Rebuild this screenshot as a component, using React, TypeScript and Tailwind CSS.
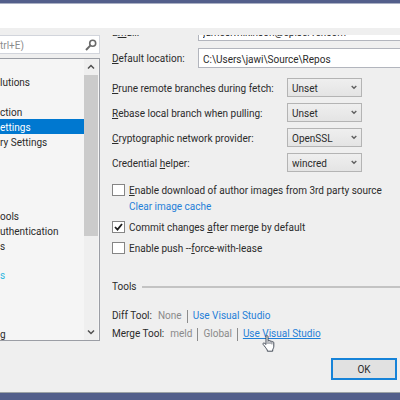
import { useState } from "react"
import type { ReactNode } from "react"

const treeTop = ["", "lutions", "", "ction", "ettings", "ry Settings"]
const treeMiddle = ["ools", "uthentication", "s"]

const gitOptions = [
  { id: "prune", label: <><u>P</u>rune remote branches during fetch:</>, values: ["Unset", "True", "False"] },
  { id: "rebase", label: <><u>R</u>ebase local branch when pulling:</>, values: ["Unset", "True", "False"] },
  { id: "crypto", label: <><u>C</u>ryptographic network provider:</>, values: ["OpenSSL", "Secure Channel"] },
  { id: "credential", label: <>Credential <u>h</u>elper:</>, values: ["wincred", "Unset"] },
]

function TreeRow({ text, selected, onSelect }: { text: string; selected: boolean; onSelect: () => void }) {
  return (
    <button
      type="button"
      onClick={onSelect}
      className={`block h-[15px] w-full whitespace-nowrap pt-[2px] text-left leading-[13px] ${selected ? "bg-[#0078d0] text-white" : ""}`}
    >
      {text}
    </button>
  )
}

function Dropdown({ id, values }: { id: string; values: string[] }) {
  return (
    <div className="relative w-[75px] shrink-0">
      <select
        id={id}
        className="block h-[19px] w-full appearance-none border border-[#b4b4b4] bg-linear-to-b from-[#efefef] to-[#e4e4e4] pl-1 pt-[2px] leading-[15px] outline-none"
      >
        {values.map((v) => (
          <option key={v}>{v}</option>
        ))}
      </select>
      <svg className="pointer-events-none absolute right-[5px] top-[7px]" width="6" height="5" viewBox="0 0 6 5" fill="none">
        <path d="M0.7 1 3 3.3 5.3 1" stroke="#606060" strokeWidth="1.4" />
      </svg>
    </div>
  )
}

function CheckRow({ id, checked, children }: { id: string; checked?: boolean; children: ReactNode }) {
  const [on, setOn] = useState(!!checked)
  return (
    <div className="flex h-4 items-center gap-1">
      <div className="relative h-3 w-[13px]">
        <input
          id={id}
          type="checkbox"
          checked={on}
          onChange={(e) => setOn(e.target.checked)}
          className="block h-3 w-[13px] appearance-none border border-[#858585] bg-white"
        />
        {on && (
          <svg className="pointer-events-none absolute left-[2px] top-[2px]" width="9" height="8" viewBox="0 0 9 8" fill="none">
            <path d="M1 4 3.5 6.6 8 1" stroke="#1e1e1e" strokeWidth="1.8" />
          </svg>
        )}
      </div>
      <label htmlFor={id} className="whitespace-nowrap pt-[2px]">{children}</label>
    </div>
  )
}

function Divider() {
  return <span className="h-[13px] w-px bg-[#8c8c8c]" />
}

function HandCursor() {
  return (
    <svg className="pointer-events-none absolute left-[19px] top-[9px]" width="14" height="17" viewBox="0 0 14 17">
      <path
        d="M4 1.6C4 .9 4.4.6 5 .6s1 .4 1 1v4.2c.2-.4.6-.5 1-.4.5 0 .9.4 1 .8.8-.5 1.7-.1 1.9.6.9-.4 1.9 0 1.9 1v3.4c0 1.8-.9 2.6-1.1 3.7v1.3H5.3v-1.1C4.4 13.5 2.4 11 1.1 9.4c-.5-.8.2-1.6 1.1-1.3.7.2 1.2.8 1.8 1.4V1.6Z"
        fill="#fff"
        stroke="#333b48"
        strokeWidth="0.9"
      />
      <path d="M6 6v3M8 6.4V9M9.9 7v2.4" stroke="#333b48" strokeWidth="0.7" />
    </svg>
  )
}

export default function App() {
  const [selected, setSelected] = useState("ettings")

  const rows = (items: string[]) =>
    items.map((text, i) =>
      text ? (
        <TreeRow key={i} text={text} selected={selected === text} onSelect={() => setSelected(text)} />
      ) : (
        <div key={i} className="h-[15px]" />
      ),
    )

  return (
    <div className="flex min-h-screen flex-col overflow-hidden bg-[#535f8b] pb-[7px] pt-[3px] font-[Roboto,'Noto_Sans',sans-serif] text-[10px] leading-4 text-[#2b2b2b]">
      <div className="flex grow flex-col border-b border-[#9da3a6] bg-[#efefef]">
        <div className="h-[25px] border-t border-[#aab0c4] bg-white" />

        <div className="mt-[7px] flex items-start gap-3">
          {/* options tree */}
          <aside className="w-[100px] shrink-0">
            <div className="flex h-[19px] items-center justify-between border-y border-r border-[#d2d5dc] bg-white pr-[2px]">
              <input aria-label="Search options" placeholder="trl+E)" className="w-14 bg-transparent pt-[2px] outline-none placeholder:text-[#8c8c8c]" />
              <svg width="12" height="12" viewBox="0 0 12 12" fill="none" stroke="#6a6a6a">
                <circle cx="7.7" cy="4.2" r="3" strokeWidth="1.6" />
                <path d="M5.5 6.4 1 11" strokeWidth="2" />
              </svg>
            </div>
            <div className="mt-1 flex h-[283px] overflow-hidden border-b border-r border-t border-[#9b9ea5] bg-[#f5f5f5]">
              <div className="min-w-0 grow">
                {rows(treeTop)}
                <div className="h-[59px]" />
                {rows(treeMiddle)}
                <div className="h-[14px]" />
                <div className="h-[15px] pt-[2px] leading-[13px] text-[#2cb6e0]">s</div>
                <div className="h-[44px]" />
                <div className="h-[15px] pt-[2px] leading-[13px]">g</div>
              </div>
              <div className="mr-px flex w-[14px] shrink-0 flex-col items-center bg-[#efefef]">
                <svg className="my-1 shrink-0" width="8" height="8" viewBox="0 0 8 8" fill="none">
                  <path d="M1 5.5 4 2.5 7 5.5" stroke="#505050" strokeWidth="1.5" />
                </svg>
                <div className="h-[161px] w-full bg-[#cbcbcb]" />
                <svg className="mb-1 mt-auto shrink-0" width="8" height="8" viewBox="0 0 8 8" fill="none">
                  <path d="M1 2.5 4 5.5 7 2.5" stroke="#505050" strokeWidth="1.5" />
                </svg>
              </div>
            </div>
          </aside>

          {/* git settings page, scrolled down a little */}
          <main className="min-w-0 grow overflow-hidden pb-3">
            <div className="-mt-[13px] flex items-center">
              <label htmlFor="email" className="w-[86px] shrink-0 pt-[2px]">E<u>m</u>ail:</label>
              <input
                id="email"
                defaultValue="james.wilkinson@episerver.com"
                className="h-[19px] min-w-0 grow border border-r-0 border-[#b2b5bd] bg-white pl-1 pt-[2px] outline-none"
              />
            </div>
            <div className="mt-[7px] flex items-center">
              <label htmlFor="location" className="w-[86px] shrink-0 pt-[2px]"><u>D</u>efault location:</label>
              <input
                id="location"
                defaultValue="C:\Users\jawi\Source\Repos"
                className="h-5 min-w-0 grow border border-r-0 border-[#b2b5bd] bg-white pl-1 pt-[2px] outline-none"
              />
            </div>

            <div className="mt-[10px] flex flex-col gap-[6px]">
              {gitOptions.map((o) => (
                <div key={o.id} className="flex h-[19px] items-center">
                  <label htmlFor={o.id} className="w-[175px] shrink-0 whitespace-nowrap pt-[2px]">{o.label}</label>
                  <Dropdown id={o.id} values={o.values} />
                </div>
              ))}
            </div>

            <div className="mt-[10px]">
              <CheckRow id="images"><u>E</u>nable download of author images from 3rd party source</CheckRow>
              <a href="#cache" className="ml-[17px] block pt-px text-[#1f80d8]">Clear image cache</a>
            </div>
            <div className="mt-1 flex flex-col gap-[5px]">
              <CheckRow id="commit" checked>Commit changes <u>a</u>fter merge by default</CheckRow>
              <CheckRow id="push">Enable push --<u>f</u>orce-with-lease</CheckRow>
            </div>

            <h2 className="mt-[23px] flex items-center gap-[6px]">
              Tools
              <span className="h-[2px] grow bg-[#c3c3c3]" />
            </h2>

            <div className="mt-3 flex h-[18px] items-center gap-[5px]">
              <span className="pr-px">Diff Tool:</span>
              <span className="text-[#8a8a8a]">None</span>
              <Divider />
              <a href="#diff" className="text-[#1f80d8]">Use Visual Studio</a>
            </div>
            <div className="flex h-[18px] items-center gap-[5px]">
              <span className="pr-px">Merge Tool:</span>
              <span className="text-[#8a8a8a]">meld</span>
              <Divider />
              <span className="text-[#8a8a8a]">Global</span>
              <Divider />
              <a href="#merge" className="relative text-[#1f80d8] underline">
                Use Visual Studio
                <HandCursor />
              </a>
            </div>
          </main>
        </div>

        <div className="mb-3 mt-auto flex justify-end pr-[3px]">
          <button type="button" className="h-[22px] w-[66px] border-2 border-[#1683d8] bg-[#e1e1e1] pt-[2px] leading-4">OK</button>
        </div>
      </div>
    </div>
  )
}
